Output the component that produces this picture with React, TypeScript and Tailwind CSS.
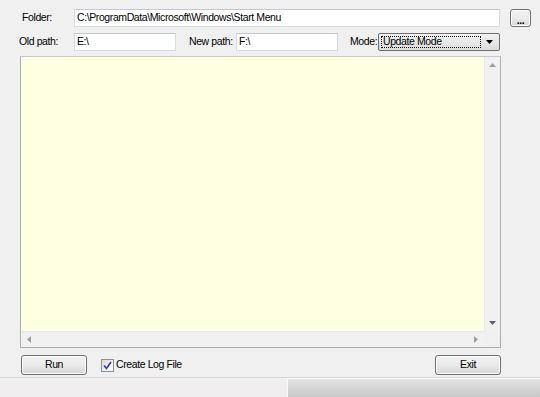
import React from "react"

const font = { fontFamily: '"Liberation Sans", Arial, sans-serif' }
const txt = "text-[10.5px] tracking-[-0.4px] text-black whitespace-nowrap"

function TextBox({ value, className }: { value: string; className: string }) {
  return (
    <div
      className={`h-[18px] bg-white border border-[#d5dbe3] border-t-[#c2c8d1] flex items-center px-[2px] ${txt} ${className}`}
    >
      {value}
    </div>
  )
}

function WinButton({ label, className }: { label: string; className: string }) {
  return (
    <div
      className={`rounded-[3px] border border-[#707070] bg-gradient-to-b from-[#f2f2f2] via-[#ebebeb] to-[#d6d6d6] flex items-center justify-center ${txt} shadow-[inset_0_0_0_1px_#fcfcfc] ${className}`}
    >
      {label}
    </div>
  )
}

export default function App() {
  return (
    <div className="w-[540px] h-[397px] bg-[#f0f0f0] flex flex-col overflow-hidden" style={font}>
      {/* folder row */}
      <div className="flex items-center mt-[9px] h-[18px]">
        <div className={`w-[74px] pl-[22px] ${txt}`}>Folder:</div>
        <TextBox value="C:\ProgramData\Microsoft\Windows\Start Menu" className="w-[426px]" />
        <WinButton label="..." className="ml-[10px] w-[21px] h-[18px] items-end pb-[1px] font-bold leading-none" />
      </div>

      {/* paths row */}
      <div className="flex items-center mt-[6px] h-[18px]">
        <div className={`w-[74px] pl-[19px] ${txt}`}>Old path:</div>
        <TextBox value="E:\" className="w-[102px]" />
        <div className={`ml-[13px] w-[47px] ${txt}`}>New path:</div>
        <TextBox value="F:\" className="w-[102px]" />
        <div className={`ml-[12px] w-[28px] ${txt}`}>Mode:</div>
        <div className="w-[122px] h-[18px] rounded-[2px] border border-[#707070] bg-gradient-to-b from-[#f2f2f2] to-[#dcdcdc] flex items-center p-[2px]">
          <div className={`flex-1 h-full border border-dotted border-black flex items-center px-[1px] ${txt} text-[#2b1f4f]`}>
            Update Mode
          </div>
          <div className="w-[16px] h-full flex items-center justify-center">
            <svg width="7" height="4" viewBox="0 0 7 4">
              <path d="M0 0h7L3.5 4z" fill="#000" />
            </svg>
          </div>
        </div>
      </div>

      {/* log area */}
      <div className="ml-[20px] mt-[5px] w-[481px] h-[292px] border border-[#abadb3] border-t-[#c5c8cf] bg-[#ffffe1] flex flex-col">
        <div className="flex flex-1">
          <div className="flex-1" />
          <div className="w-[16px] bg-[#f1f1f1] border-l border-[#e8e8e8] flex flex-col justify-between items-center py-[6px]">
            <svg width="7" height="4" viewBox="0 0 7 4">
              <path d="M3.5 0L7 4H0z" fill="#a0a0a0" />
            </svg>
            <svg width="7" height="4" viewBox="0 0 7 4">
              <path d="M0 0h7L3.5 4z" fill="#606060" />
            </svg>
          </div>
        </div>
        <div className="flex h-[16px]">
          <div className="flex-1 bg-[#f1f1f1] border-t border-[#e8e8e8] flex items-center justify-between px-[6px]">
            <svg width="4" height="7" viewBox="0 0 4 7">
              <path d="M0 3.5L4 0v7z" fill="#a0a0a0" />
            </svg>
            <svg width="4" height="7" viewBox="0 0 4 7">
              <path d="M4 3.5L0 0v7z" fill="#a0a0a0" />
            </svg>
          </div>
          <div className="w-[16px] bg-[#f0f0f0]" />
        </div>
      </div>

      {/* buttons row */}
      <div className="flex items-center mt-[7px] h-[20px]">
        <WinButton label="Run" className="ml-[21px] w-[66px] h-[20px]" />
        <div className="ml-[14px] w-[13px] h-[13px] border border-[#8e8f8f] bg-gradient-to-br from-[#dcdcdc] to-[#ffffff] flex items-center justify-center">
          <svg width="9" height="9" viewBox="0 0 9 9">
            <path d="M1 4.5L3.5 7.5L8 1" stroke="#2a3f9b" strokeWidth="1.6" fill="none" />
          </svg>
        </div>
        <div className={`ml-[2px] ${txt}`}>Create Log File</div>
        <div className="flex-1" />
        <WinButton label="Exit" className="mr-[39px] w-[66px] h-[20px]" />
      </div>

      {/* status bar */}
      <div className="mt-[2px] flex-1 flex border-t border-[#d7d7d7]">
        <div className="w-[287px] bg-[#f0eeee]" />
        <div className="flex-1 border-l border-t border-[#fafafa] bg-gradient-to-b from-[#e4e4e4] to-[#c8c8c8]" />
      </div>
    </div>
  )
}
